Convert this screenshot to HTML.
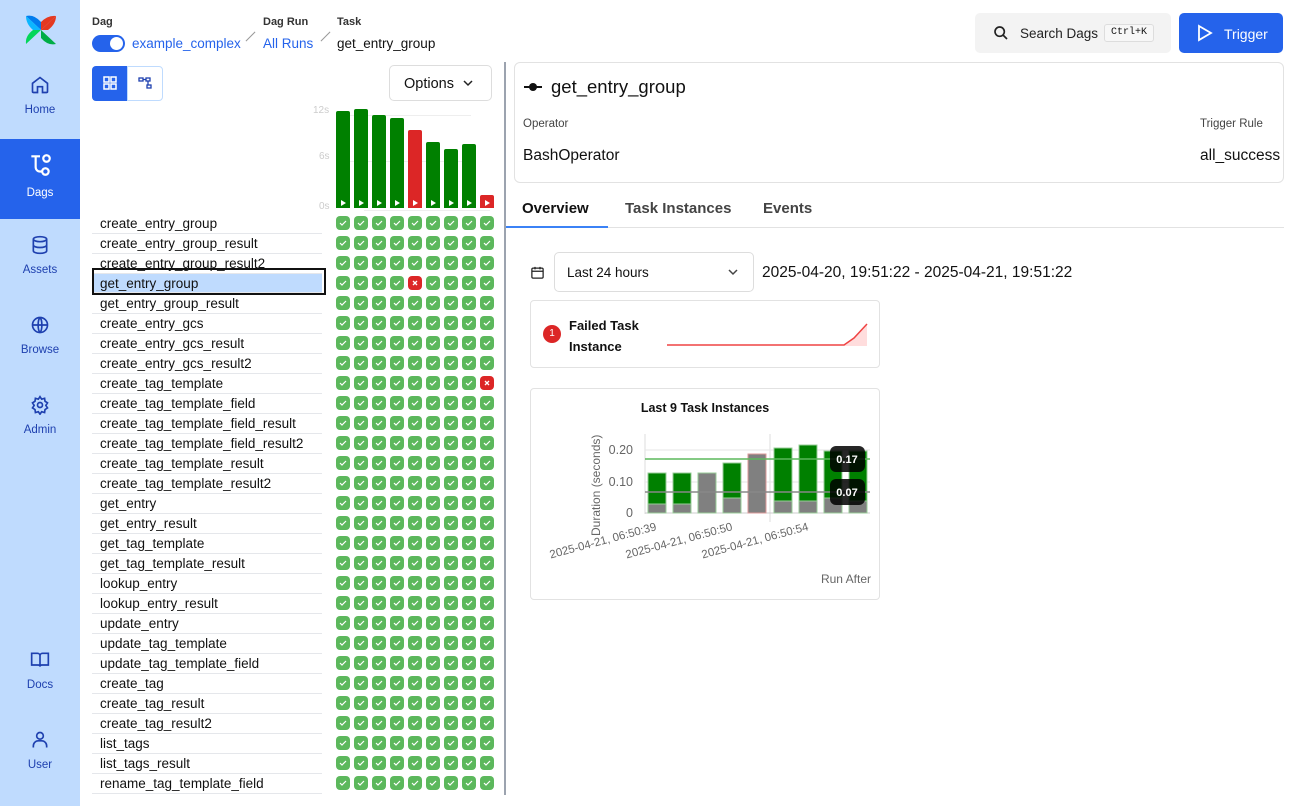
<!DOCTYPE html>
<html><head><meta charset="utf-8">
<style>
*{box-sizing:border-box;margin:0;padding:0}
body{width:1296px;height:806px;overflow:hidden;background:#fff;font-family:"Liberation Sans",sans-serif;color:#111;position:relative}
.a{position:absolute}
.side{left:0;top:0;width:80px;height:806px;background:#bfdbfe}
.nav{position:absolute;left:0;width:80px;text-align:center;color:#1e40af;font-size:11.5px}
.nav svg{display:block;margin:0 auto 9px}
.lbl{font-size:11px;font-weight:bold;color:#333}
.row{position:absolute;left:92px;width:230px;height:20px;font-size:13.5px;line-height:20px;padding-left:8px;border-bottom:1px solid #e5e7eb;color:#111;white-space:nowrap}
.c{position:absolute;width:14px;height:14px;border-radius:4px;background:#5cb85c}
.c svg{position:absolute;left:2px;top:2px}
.bar{position:absolute;width:14px;background:#008000;border-radius:2px 2px 0 0}
.tri{position:absolute;bottom:2px;left:5px;width:0;height:0;border-left:5px solid #fff;border-top:3px solid transparent;border-bottom:3px solid transparent}
</style></head><body>
<div class="a side">
 <svg class="a" style="left:22px;top:12px" width="38" height="36" viewBox="0 0 38 36">
  <path d="M19 18 L4 4 Q12 2 19 10Z" fill="#017cee"/><path d="M19 18 L34 4 Q34 12 26 18Z" fill="#e43921"/>
  <path d="M19 18 L34 32 Q26 34 19 26Z" fill="#00ad46"/><path d="M19 18 L4 32 Q3 24 11 18Z" fill="#04d659"/>
  <path d="M19 18 L11 18 Q4 12 4 4Z" fill="#0cb6ff"/><path d="M19 18 L19 10 Q26 3 34 4Z" fill="#e43921"/>
 </svg>
 <div class="nav" style="top:75px"><svg width="20" height="20" viewBox="0 0 24 24" fill="none" stroke="#1e40af" stroke-width="2"><path d="M3 10l9-7 9 7v10a1 1 0 0 1-1 1h-5v-7h-6v7H4a1 1 0 0 1-1-1z"/></svg>Home</div>
 <div class="a" style="left:0;top:139px;width:80px;height:80px;background:#2563eb"></div>
 <div class="nav" style="top:152px;color:#fff"><svg width="26" height="26" viewBox="0 0 24 24" fill="none" stroke="#fff" stroke-width="2"><path d="M4 4h8M8 4v10a4 4 0 0 0 4 4h2"/><circle cx="18" cy="6" r="3"/><circle cx="17" cy="18" r="3"/></svg>Dags</div>
 <div class="nav" style="top:235px"><svg width="20" height="20" viewBox="0 0 24 24" fill="none" stroke="#1e40af" stroke-width="2"><ellipse cx="12" cy="5" rx="8" ry="3"/><path d="M4 5v14c0 1.7 3.6 3 8 3s8-1.3 8-3V5M4 12c0 1.7 3.6 3 8 3s8-1.3 8-3"/></svg>Assets</div>
 <div class="nav" style="top:315px"><svg width="20" height="20" viewBox="0 0 24 24" fill="none" stroke="#1e40af" stroke-width="2"><circle cx="12" cy="12" r="9"/><path d="M3 12h18M12 3c3 3 3 15 0 18M12 3c-3 3-3 15 0 18"/></svg>Browse</div>
 <div class="nav" style="top:395px"><svg width="20" height="20" viewBox="0 0 24 24" fill="none" stroke="#1e40af" stroke-width="2"><circle cx="12" cy="12" r="3"/><path d="M12 2l2 3 3.5-1 .5 3.5 3 2-2 3 2 3-3 2-.5 3.5-3.5-1-2 3-2-3-3.5 1-.5-3.5-3-2 2-3-2-3 3-2 .5-3.5 3.5 1z"/></svg>Admin</div>
 <div class="nav" style="top:650px"><svg width="20" height="20" viewBox="0 0 24 24" fill="none" stroke="#1e40af" stroke-width="2"><path d="M2 4h7a3 3 0 0 1 3 3v13a2 2 0 0 0-2-2H2zM22 4h-7a3 3 0 0 0-3 3v13a2 2 0 0 1 2-2h8z"/></svg>Docs</div>
 <div class="nav" style="top:730px"><svg width="20" height="20" viewBox="0 0 24 24" fill="none" stroke="#1e40af" stroke-width="2"><circle cx="12" cy="7" r="4"/><path d="M4 21v-2a6 6 0 0 1 6-6h4a6 6 0 0 1 6 6v2"/></svg>User</div>
</div>

<div class="a lbl" style="left:92px;top:16px">Dag</div>
<div class="a" style="left:92px;top:35px;width:33px;height:17px;border-radius:9px;background:#2563eb"><div class="a" style="left:18px;top:2px;width:13px;height:13px;border-radius:50%;background:#fff"></div></div>
<div class="a" style="left:132px;top:36px;font-size:13.5px;color:#2563eb">example_complex</div>
<div class="a" style="left:250px;top:30px;width:1px;height:13px;background:#999;transform:rotate(45deg)"></div>
<div class="a lbl" style="left:263px;top:16px">Dag Run</div>
<div class="a" style="left:263px;top:36px;font-size:13.5px;color:#2563eb">All Runs</div>
<div class="a" style="left:325px;top:30px;width:1px;height:13px;background:#999;transform:rotate(45deg)"></div>
<div class="a lbl" style="left:337px;top:16px">Task</div>
<div class="a" style="left:337px;top:36px;font-size:13.5px">get_entry_group</div>

<div class="a" style="left:975px;top:13px;width:196px;height:40px;background:#f3f3f3;border-radius:5px"></div>
<svg class="a" style="left:993px;top:25px" width="16" height="16" viewBox="0 0 24 24" fill="none" stroke="#222" stroke-width="2.5"><circle cx="10" cy="10" r="7"/><path d="M15 15l6 6"/></svg>
<div class="a" style="left:1020px;top:26px;font-size:13.5px;color:#222">Search Dags</div>
<div class="a" style="left:1104px;top:24px;width:50px;height:18px;border:1px solid #ddd;border-radius:3px;background:#f7f7f7;font-family:'Liberation Mono',monospace;font-size:10px;text-align:center;line-height:16px">Ctrl+K</div>
<div class="a" style="left:1179px;top:13px;width:104px;height:40px;background:#2563eb;border-radius:5px"></div>
<svg class="a" style="left:1197px;top:24px" width="16" height="18" viewBox="0 0 16 18" fill="none" stroke="#fff" stroke-width="1.8"><path d="M2 2l12 7-12 7z"/></svg>
<div class="a" style="left:1224px;top:26px;font-size:14px;color:#fff">Trigger</div>

<div class="a" style="left:92px;top:66px;width:36px;height:35px;background:#2563eb;border-radius:4px 0 0 4px"></div>
<svg class="a" style="left:103px;top:76px" width="14" height="14" viewBox="0 0 14 14" fill="none" stroke="#fff" stroke-width="1.5"><rect x="1" y="1" width="5" height="5"/><rect x="8" y="1" width="5" height="5"/><rect x="1" y="8" width="5" height="5"/><rect x="8" y="8" width="5" height="5"/></svg>
<div class="a" style="left:127px;top:66px;width:36px;height:35px;border:1px solid #bfdbfe;border-radius:0 4px 4px 0"></div>
<svg class="a" style="left:138px;top:77px" width="14" height="13" viewBox="0 0 14 13" fill="none" stroke="#1e40af" stroke-width="1.3"><rect x="1" y="1" width="4" height="3"/><rect x="8" y="1" width="4" height="3"/><rect x="9" y="8" width="4" height="3"/><path d="M5 2.5h3M10 4v4"/></svg>
<div class="a" style="left:389px;top:65px;width:103px;height:36px;border:1px solid #ddd;border-radius:5px;font-size:14.5px;line-height:36px;padding-left:14px">Options</div>
<svg class="a" style="left:463px;top:79px" width="10" height="8" viewBox="0 0 10 8" fill="none" stroke="#222" stroke-width="1.5"><path d="M1 2l4 4 4-4"/></svg>

<div class="a" style="left:313px;top:105px;font-size:10px;color:#ccc">12s</div>
<div class="a" style="left:319px;top:151px;font-size:10px;color:#ccc">6s</div>
<div class="a" style="left:319px;top:201px;font-size:10px;color:#ccc">0s</div>
<div class="a" style="left:336px;top:115px;width:135px;height:1px;background:#eee"></div>
<div class="a" style="left:336px;top:161px;width:135px;height:1px;background:#eee"></div>
<div class="a" style="left:364px;top:210px;width:126px;height:1px;background:#eee"></div>
<div id="bars"></div>
<div id="grid"></div>

<div class="row" style="top:214px">create_entry_group</div>
<div class="row" style="top:234px">create_entry_group_result</div>
<div class="row" style="top:254px">create_entry_group_result2</div>
<div class="row" style="top:274px;background:#bfdbfe;height:19px">get_entry_group</div>
<div class="a" style="left:92px;top:268px;width:234px;height:27px;border:2px solid #111"></div>
<div class="row" style="top:294px">get_entry_group_result</div>
<div class="row" style="top:314px">create_entry_gcs</div>
<div class="row" style="top:334px">create_entry_gcs_result</div>
<div class="row" style="top:354px">create_entry_gcs_result2</div>
<div class="row" style="top:374px">create_tag_template</div>
<div class="row" style="top:394px">create_tag_template_field</div>
<div class="row" style="top:414px">create_tag_template_field_result</div>
<div class="row" style="top:434px">create_tag_template_field_result2</div>
<div class="row" style="top:454px">create_tag_template_result</div>
<div class="row" style="top:474px">create_tag_template_result2</div>
<div class="row" style="top:494px">get_entry</div>
<div class="row" style="top:514px">get_entry_result</div>
<div class="row" style="top:534px">get_tag_template</div>
<div class="row" style="top:554px">get_tag_template_result</div>
<div class="row" style="top:574px">lookup_entry</div>
<div class="row" style="top:594px">lookup_entry_result</div>
<div class="row" style="top:614px">update_entry</div>
<div class="row" style="top:634px">update_tag_template</div>
<div class="row" style="top:654px">update_tag_template_field</div>
<div class="row" style="top:674px">create_tag</div>
<div class="row" style="top:694px">create_tag_result</div>
<div class="row" style="top:714px">create_tag_result2</div>
<div class="row" style="top:734px">list_tags</div>
<div class="row" style="top:754px">list_tags_result</div>
<div class="row" style="top:774px">rename_tag_template_field</div>

<div class="a" style="left:504px;top:62px;width:2px;height:733px;background:#9ca3af"></div>

<div class="a" style="left:514px;top:62px;width:770px;height:121px;border:1px solid #e2e2e2;border-radius:6px"></div>
<div class="a" style="left:524px;top:86px;width:18px;height:2px;background:#111"></div>
<div class="a" style="left:529px;top:83px;width:8px;height:8px;border-radius:50%;background:#111"></div>
<div class="a" style="left:551px;top:76px;font-size:18.5px;font-weight:500">get_entry_group</div>
<div class="a" style="left:523px;top:118px;font-size:11.5px;color:#444">Operator</div>
<div class="a" style="left:523px;top:147px;font-size:15.5px">BashOperator</div>
<div class="a" style="left:1200px;top:118px;font-size:11.5px;color:#444">Trigger Rule</div>
<div class="a" style="left:1200px;top:147px;font-size:15.5px">all_success</div>

<div class="a" style="left:522px;top:200px;font-size:15px;font-weight:bold">Overview</div>
<div class="a" style="left:625px;top:200px;font-size:15px;font-weight:bold;color:#444">Task Instances</div>
<div class="a" style="left:763px;top:200px;font-size:15px;font-weight:bold;color:#444">Events</div>
<div class="a" style="left:506px;top:227px;width:778px;height:1px;background:#e2e2e2"></div>
<div class="a" style="left:506px;top:226px;width:102px;height:2px;background:#3b82f6"></div>

<svg class="a" style="left:530px;top:265px" width="15" height="15" viewBox="0 0 24 24" fill="none" stroke="#222" stroke-width="2"><rect x="3" y="5" width="18" height="16" rx="2"/><path d="M3 10h18M8 3v4M16 3v4"/></svg>
<div class="a" style="left:554px;top:252px;width:200px;height:40px;border:1px solid #ddd;border-radius:5px;font-size:13.5px;line-height:40px;padding-left:12px">Last 24 hours</div>
<svg class="a" style="left:728px;top:268px" width="10" height="8" viewBox="0 0 10 8" fill="none" stroke="#444" stroke-width="1.5"><path d="M1 2l4 4 4-4"/></svg>
<div class="a" style="left:762px;top:264px;font-size:15.5px">2025-04-20, 19:51:22 - 2025-04-21, 19:51:22</div>

<div class="a" style="left:530px;top:300px;width:350px;height:68px;border:1px solid #e2e2e2;border-radius:4px"></div>
<div class="a" style="left:543px;top:325px;width:18px;height:18px;border-radius:50%;background:#dc2626;color:#fff;font-size:10px;text-align:center;line-height:18px">1</div>
<div class="a" style="left:569px;top:315px;font-size:13px;font-weight:bold;line-height:21px">Failed Task<br>Instance</div>
<svg class="a" style="left:666px;top:322px" width="202" height="24" viewBox="0 0 202 24"><path d="M178 24 L188 16 L201 2 L201 24Z" fill="#fdd"/><path d="M1 23 H178 L188 16 L201 2" fill="none" stroke="#ef4444" stroke-width="1.5"/></svg>

<div class="a" style="left:530px;top:388px;width:350px;height:212px;border:1px solid #e2e2e2;border-radius:4px"></div>
<div class="a" style="left:530px;top:401px;width:350px;text-align:center;font-size:12.5px;font-weight:bold">Last 9 Task Instances</div>
<svg class="a" style="left:530px;top:388px" width="350" height="212" viewBox="530 388 350 212" font-family="Liberation Sans, sans-serif">
 <line x1="645" y1="434" x2="645" y2="514" stroke="#ddd"/>
 <line x1="770" y1="434" x2="770" y2="522" stroke="#ddd"/>
 <line x1="645" y1="450" x2="870" y2="450" stroke="#e5e5e5"/>
 <line x1="645" y1="482" x2="870" y2="482" stroke="#e5e5e5"/>
 <line x1="645" y1="513" x2="870" y2="513" stroke="#ccc"/>
 <text x="633" y="454" font-size="12.5" fill="#666" text-anchor="end">0.20</text>
 <text x="633" y="486" font-size="12.5" fill="#666" text-anchor="end">0.10</text>
 <text x="633" y="517" font-size="12.5" fill="#666" text-anchor="end">0</text>
 <text transform="translate(600,536) rotate(-90)" font-size="12" fill="#666">Duration (seconds)</text>
 <g stroke="#9c9" stroke-width="1">
 <rect x="648" y="473" width="18" height="40" fill="#008000"/><rect x="648" y="504" width="18" height="9" fill="#808080"/>
 <rect x="673" y="473" width="18" height="40" fill="#008000"/><rect x="673" y="504" width="18" height="9" fill="#808080"/>
 <rect x="698" y="473" width="18" height="40" fill="#808080"/>
 <rect x="723" y="463" width="18" height="50" fill="#008000"/><rect x="723" y="498" width="18" height="15" fill="#808080"/>
 <rect x="748" y="454" width="18" height="59" fill="#808080" stroke="#d99"/>
 <rect x="774" y="448" width="18" height="65" fill="#008000"/><rect x="774" y="501" width="18" height="12" fill="#808080"/>
 <rect x="799" y="445" width="18" height="68" fill="#008000"/><rect x="799" y="501" width="18" height="12" fill="#808080"/>
 <rect x="824" y="451" width="18" height="62" fill="#008000"/><rect x="824" y="498" width="18" height="15" fill="#808080"/>
 <rect x="849" y="451" width="18" height="62" fill="#008000"/><rect x="849" y="501" width="18" height="12" fill="#808080"/>
 </g>
 <line x1="645" y1="459" x2="870" y2="459" stroke="#5cb85c" stroke-width="1.5"/>
 <line x1="645" y1="492" x2="870" y2="492" stroke="#888" stroke-width="1.5"/>
 <rect x="830" y="446" width="35" height="26" rx="6" fill="#000" opacity="0.85"/><text x="847" y="463" font-size="11" font-weight="bold" fill="#fff" text-anchor="middle">0.17</text>
 <rect x="830" y="479" width="35" height="26" rx="6" fill="#000" opacity="0.85"/><text x="847" y="496" font-size="11" font-weight="bold" fill="#fff" text-anchor="middle">0.07</text>
 <text transform="translate(657,530) rotate(-15)" font-size="11.5" fill="#666" text-anchor="end">2025-04-21, 06:50:39</text>
 <text transform="translate(733,530) rotate(-15)" font-size="11.5" fill="#666" text-anchor="end">2025-04-21, 06:50:50</text>
 <text transform="translate(809,530) rotate(-15)" font-size="11.5" fill="#666" text-anchor="end">2025-04-21, 06:50:54</text>
 <text x="871" y="583" font-size="12" fill="#666" text-anchor="end">Run After</text>
</svg>

<script>
var xs=[336,354,372,390,408,426,444,462,480];
var tops=[111,109,115,118,130,142,149,144,195];
var b='';
for(var i=0;i<9;i++){var red=(i==4||i==8);b+='<div class="bar" style="left:'+xs[i]+'px;top:'+tops[i]+'px;height:'+(208-tops[i])+'px;background:'+(red?'#dc2626':'#008000')+'"><div class="tri"></div></div>';}
document.getElementById('bars').innerHTML=b;
var ck='<svg width="10" height="10" viewBox="0 0 10 10" fill="none" stroke="#fff" stroke-width="1.2"><path d="M2 5l2 2 4-4"/></svg>';
var xx='<svg width="10" height="10" viewBox="0 0 10 10" fill="none" stroke="#fff" stroke-width="1.3"><path d="M3 3l4 4M7 3l-4 4"/></svg>';
var g='';
for(var r=0;r<29;r++)for(var c=0;c<9;c++){var f=(r==3&&c==4)||(r==8&&c==8);g+='<div class="c" style="left:'+xs[c]+'px;top:'+(216+r*20)+'px;background:'+(f?'#dc2626':'#5cb85c')+'">'+(f?xx:ck)+'</div>';}
document.getElementById('grid').innerHTML=g;
</script>
</body></html>
